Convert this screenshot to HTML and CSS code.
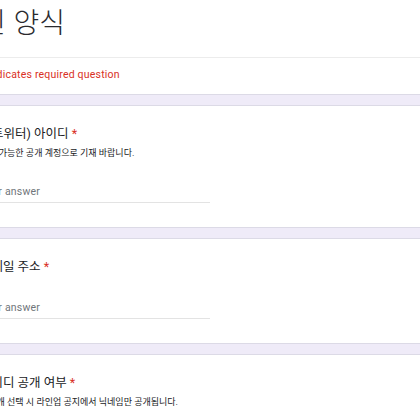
FILE: index.html
```html
<!DOCTYPE html>
<html lang="ko">
<head>
<meta charset="utf-8">
<title>양식</title>
<link rel="stylesheet" href="styles.css">
</head>
<body>
<div class="page">
  <section class="card title-card">
    <div class="head">
      <h1 class="form-title">인 양식</h1>
    </div>
    <div class="required-note">* Indicates required question</div>
  </section>

  <section class="card question">
    <div class="q-title">X(트위터) 아이디 <span class="req">*</span></div>
    <div class="q-desc">확인 가능한 공개 계정으로 기재 바랍니다.</div>
    <div class="answer">Your answer</div>
  </section>

  <section class="card question">
    <div class="q-title">이메일 주소 <span class="req">*</span></div>
    <div class="answer">Your answer</div>
  </section>

  <section class="card question">
    <div class="q-title">아이디 공개 여부 <span class="req">*</span></div>
    <div class="q-desc">비공개 선택 시 라인업 공지에서 닉네임만 공개됩니다.</div>
  </section>
</div>
</body>
</html>
```

FILE: styles.css
```css
html, body {
  margin: 0;
  padding: 0;
}

body {
  background: #efebf8;
  overflow: hidden;
  font-family: Roboto, "Noto Sans CJK KR", sans-serif;
  color: #202124;
}

.page {
  margin-left: -39px;
  width: 498px;
  display: flex;
  flex-direction: column;
  gap: 10px;
}

.card {
  background: #ffffff;
  border: 1px solid #dcdae6;
  border-radius: 8px;
  padding: 17px 18px 18px;
}

.title-card {
  border-top: none;
  border-radius: 0 0 8px 8px;
  padding: 0;
}

.head {
  padding: 5px 18px 20px;
}

.form-title {
  margin: 0;
  font-family: "Noto Sans CJK KR", sans-serif;
  font-size: 28px;
  line-height: 32px;
  font-weight: 300;
  color: #2a2a2e;
}

.required-note {
  border-top: 1px solid #ececec;
  padding: 9px 18px 11px;
  font-size: 10.5px;
  line-height: 16px;
  letter-spacing: 0.2px;
  color: #d93025;
}

.q-title {
  font-size: 12.5px;
  line-height: 21px;
  margin-bottom: 3px;
  color: #202124;
}

.req {
  color: #d93025;
}

.q-desc {
  margin-top: -2px;
  font-size: 9px;
  line-height: 16px;
  color: #202124;
}

.answer {
  margin-top: 21px;
  margin-bottom: 6px;
  width: 50%;
  height: 20px;
  line-height: 20px;
  border-bottom: 1px solid #e3e3e3;
  font-size: 10.5px;
  letter-spacing: 0.2px;
  color: #70757a;
}
```
